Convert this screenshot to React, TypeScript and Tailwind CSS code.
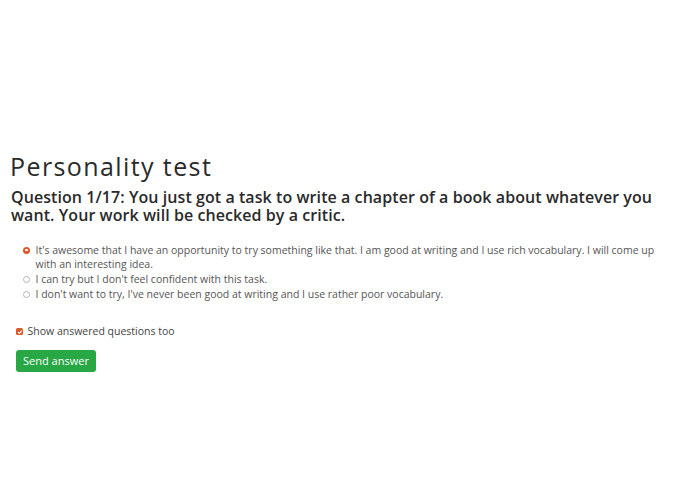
import React from "react";

const answers = [
  "It's awesome that I have an opportunity to try something like that. I am good at writing and I use rich vocabulary. I will come up with an interesting idea.",
  "I can try but I don't feel confident with this task.",
  "I don't want to try, I've never been good at writing and I use rather poor vocabulary.",
];

export default function App() {
  return (
    <div
      className="min-h-[494px] bg-white pt-[151px] pl-[10px] pr-[25px]"
      style={{ fontFamily: '"Open Sans", sans-serif' }}
    >
      <h1 className="text-[25px] leading-[30px] font-medium tracking-[1.4px] text-[#2a2a2a]">Personality test</h1>
      <h2 className="mt-[8px] pl-[1px] text-[16px] leading-[17.5px] font-semibold tracking-[0.07px] text-[#2a2a2a]">
        Question 1/17: You just got a task to write a chapter of a book about whatever you want. Your work will be checked by a critic.
      </h2>
      <div className="mt-[18.5px] flex flex-col pl-[13px]">
        {answers.map((a, i) => (
          <label key={i} className="flex items-start gap-[5.5px] text-[10.5px] leading-[14.7px] text-[#555]">
            <span className="mt-[4px] flex h-[7px] w-[7px] shrink-0 items-center justify-center">
              {i === 0 ? (
                <span className="flex h-[7px] w-[7px] items-center justify-center rounded-full bg-[#dc5a2a]">
                  <span className="h-[2.5px] w-[2.5px] rounded-full bg-white" />
                </span>
              ) : (
                <span className="h-[7px] w-[7px] rounded-full border border-[#b5b5b5] bg-white" />
              )}
            </span>
            <span>{a}</span>
          </label>
        ))}
      </div>
      <label className="mt-[23px] ml-[6px] flex items-center gap-[4.5px] text-[10.5px] leading-[15px] text-[#444]">
        <span className="flex h-[7px] w-[7px] items-center justify-center rounded-[1.5px] bg-[#dc5a2a]">
          <svg width="6" height="6" viewBox="0 0 6 6">
            <path d="M1.1 3.1 L2.4 4.4 L4.9 1.6" stroke="white" strokeWidth="1.1" fill="none" />
          </svg>
        </span>
        Show answered questions too
      </label>
      <button className="mt-[11px] ml-[6px] block h-[22px] w-[80px] rounded-[3px] bg-[#28a745] text-center text-[11px] text-white">
        Send answer
      </button>
    </div>
  );
}
